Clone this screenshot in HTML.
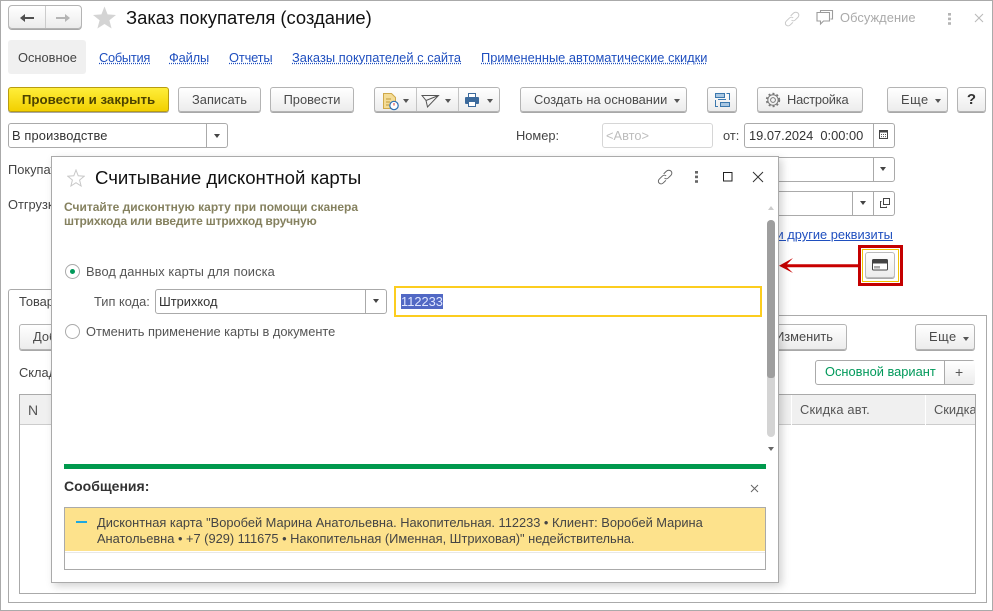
<!DOCTYPE html>
<html lang="ru"><head><meta charset="utf-8"><title>Заказ покупателя</title>
<style>
html,body{margin:0;padding:0;background:#fff}
#r{position:relative;width:993px;height:611px;overflow:hidden;background:#fff;font:12.85px/14px "Liberation Sans",sans-serif;color:#333}
#r div,#r span.t,#r svg{position:absolute}
.t{white-space:nowrap;position:absolute}
.b{box-sizing:border-box;border:1px solid #b4b4b4;border-radius:3px;background:linear-gradient(#fff,#ececec);box-shadow:0 1px 0 #a8a8a8;height:25px;text-align:center;line-height:24px;white-space:nowrap;color:#4a4a4a}
.f{box-sizing:border-box;border:1px solid #aaa;border-radius:3px;background:#fff;height:25px}
.l{color:#1f4fbf;text-decoration:underline dotted #1f4fbf}
.tr{width:6px;height:4px;background:#555;clip-path:polygon(0 0,100% 0,50% 100%)}
.sep{width:1px;background:#aaa}
</style></head><body><div id="r">
<div style="left:0;top:0;width:991px;height:609px;border:1px solid #aaa"></div>

<!-- Nav -->
<div class="b" style="left:8px;top:5px;width:74px;height:24px;border-radius:4px"></div>
<div class="sep" style="left:45px;top:6px;height:22px;background:#ccc"></div>
<svg style="left:19px;top:12px" width="16" height="12"><path d="M1 6L6 2V5H15V7H6V10Z" fill="#505050"/></svg>
<svg style="left:55px;top:12px" width="16" height="12"><path d="M15 6L10 2V5H1V7H10V10Z" fill="#b5b5b5"/></svg>
<svg style="left:92px;top:6px" width="25" height="24"><path d="M12.5 0.5L15.6 8.4L24 9L17.4 14.2L19.6 22.5L12.5 18L5.4 22.5L7.6 14.2L1 9L9.4 8.4Z" fill="#d4d4d4"/></svg>
<span class="t" style="left:126px;top:8px;font-size:18.4px;line-height:20px;color:#111">Заказ покупателя (создание)</span>

<svg style="left:784px;top:11px" width="16" height="16" viewBox="0 0 18 18" fill="none" stroke="#c8c8c8" stroke-width="1.1"><path d="M7.5 5.5L10.5 2.5C12 1 14.5 1 15.8 2.4C17 3.7 17 5.8 15.6 7.2L12.5 10.2C11.2 11.4 9.5 11.3 8.5 10.2"/><path d="M10.3 7.8C9.2 6.7 7.4 6.7 6.2 7.8L2.6 11.3C1.2 12.7 1.2 14.6 2.4 15.8C3.7 17 5.7 17 7 15.7L10 12.8"/></svg>
<svg style="left:816px;top:9px" width="18" height="18" fill="none" stroke="#9c9c9c" stroke-width="1.1"><path d="M4.5 3V1.5H16.5V10H14.5"/><path d="M1 3.5H13.5V12H7.5L4.5 15V12H1Z" fill="#fff"/></svg>
<span class="t" style="left:840px;top:11px;color:#aaa;letter-spacing:.08px">Обсуждение</span>
<svg style="left:947px;top:12px" width="6" height="14" fill="#b5b5b5"><rect x="1" y="1" width="3" height="2.6"/><rect x="1" y="5.6" width="3" height="2.6"/><rect x="1" y="10.2" width="3" height="2.6"/></svg>
<svg style="left:973px;top:12px" width="12" height="12" stroke="#bbb" stroke-width="1.1"><path d="M2 2L10 10M10 2L2 10"/></svg>

<!-- Tabs -->
<div style="left:8px;top:40px;width:78px;height:34px;background:#f0f0f0;border-radius:3px"></div>
<span class="t" style="left:18px;top:51px;color:#444">Основное</span>
<span class="t l" style="left:99px;top:51px;letter-spacing:-.28px">События</span>
<span class="t l" style="left:169px;top:51px;letter-spacing:-.15px">Файлы</span>
<span class="t l" style="left:229px;top:51px;letter-spacing:-.15px">Отчеты</span>
<span class="t l" style="left:292px;top:51px;letter-spacing:.04px">Заказы покупателей с сайта</span>
<span class="t l" style="left:481px;top:51px">Примененные автоматические скидки</span>

<!-- Toolbar -->
<div class="b" style="left:8px;top:87px;width:161px;background:linear-gradient(#ffee3a,#f2d000);border-color:#b89c10;font-weight:bold;color:#4d4300;font-size:13.3px">Провести и закрыть</div>
<div class="b" style="left:178px;top:87px;width:83px">Записать</div>
<div class="b" style="left:270px;top:87px;width:84px">Провести</div>
<div class="b" style="left:374px;top:87px;width:126px"></div>
<div class="sep" style="left:416px;top:88px;height:23px;background:#c4c4c4"></div>
<div class="sep" style="left:458px;top:88px;height:23px;background:#c4c4c4"></div>
<svg style="left:382px;top:93px" width="20" height="18"><path d="M1.5 0.5H9.5L13.5 4.5V15.5H1.5Z" fill="#f4dc96" stroke="#cfa94a"/><path d="M4 6H9M4 9H8M4 12H7" stroke="#c09a3a"/><circle cx="12" cy="12.5" r="4.2" fill="#fff" stroke="#2c6fb3" stroke-width="1.2"/><path d="M12 10V12.5" stroke="#d0342c"/></svg>
<div class="tr" style="left:403px;top:99px"></div>
<svg style="left:421px;top:93px" width="19" height="16" fill="none" stroke="#555" stroke-width="1"><path d="M1 2.5H17.5L6.5 14L5 7.5Z M5 7.5L17.5 2.5"/></svg>
<div class="tr" style="left:445px;top:99px"></div>
<svg style="left:464px;top:92px" width="18" height="16"><rect x="4.5" y="1.5" width="7" height="4" fill="#fff" stroke="#3c6a9c"/><rect x="1" y="5" width="14" height="7" rx="1" fill="#3c6a9c"/><rect x="4.5" y="9.5" width="7" height="5" fill="#fff" stroke="#3c6a9c"/></svg>
<div class="tr" style="left:487px;top:99px"></div>

<div class="b" style="left:520px;top:87px;width:167px;text-align:left;padding-left:13px">Создать на основании</div>
<div class="tr" style="left:674px;top:99px"></div>
<div class="b" style="left:707px;top:87px;width:30px"></div>
<svg style="left:714px;top:92px" width="16" height="16" fill="none"><rect x="1.5" y="1.5" width="9" height="4" fill="#a9c7e2" stroke="#3c78ad"/><rect x="6.5" y="10.5" width="9" height="4" fill="#a9c7e2" stroke="#3c78ad"/><path d="M1.5 8V14.5H4M15.5 8V1.5H12.5M4 7.5H12" stroke="#3c78ad"/></svg>
<div class="b" style="left:757px;top:87px;width:106px;text-align:left;padding-left:29px;letter-spacing:-.2px">Настройка</div>
<svg style="left:765px;top:92px" width="16" height="16" fill="none" stroke="#777"><circle cx="8" cy="8" r="2.4"/><circle cx="8" cy="8" r="5.2"/><circle cx="8" cy="8" r="6.4" stroke-dasharray="2 2.2" stroke-width="1.6"/></svg>
<div class="b" style="left:887px;top:87px;width:61px;text-align:left;padding-left:13px;letter-spacing:.5px">Еще</div>
<div class="tr" style="left:935px;top:99px"></div>
<div class="b" style="left:957px;top:87px;width:29px;font-weight:bold;font-size:15px;color:#333">?</div>

<!-- Fields row -->
<div class="f" style="left:8px;top:123px;width:220px"></div>
<span class="t" style="left:12px;top:129px;letter-spacing:.14px">В производстве</span>
<div class="sep" style="left:206px;top:124px;height:23px"></div>
<div class="tr" style="left:214px;top:134px;background:#444"></div>
<span class="t" style="left:516px;top:129px;color:#444">Номер:</span>
<div class="f" style="left:602px;top:123px;width:111px;border-color:#d6d6d6"></div>
<span class="t" style="left:606px;top:129px;color:#bdbdbd">&lt;Авто&gt;</span>
<span class="t" style="left:723px;top:129px;color:#444">от:</span>
<div class="f" style="left:744px;top:123px;width:151px"></div>
<span class="t" style="left:749px;top:129px;color:#333">19.07.2024 &nbsp;0:00:00</span>
<div class="sep" style="left:873px;top:124px;height:23px"></div>
<svg style="left:878px;top:128px" width="11" height="12"><rect x="1.5" y="2.5" width="8" height="8" fill="#fff" stroke="#444"/><rect x="1" y="2" width="9" height="2.5" fill="#444"/><path d="M3 6.5H8.5M3 8.6H8.5" stroke="#555" stroke-dasharray="1 1"/></svg>

<span class="t" style="left:8px;top:163px;color:#444">Покупатель:</span>
<span class="t" style="left:8px;top:198px;color:#444">Отгрузка:</span>
<div class="f" style="left:700px;top:157px;width:195px"></div>
<div class="sep" style="left:873px;top:158px;height:23px"></div>
<div class="tr" style="left:880px;top:167px;background:#444"></div>
<div class="f" style="left:700px;top:191px;width:195px"></div>
<div class="sep" style="left:852px;top:192px;height:23px"></div>
<div class="sep" style="left:873px;top:192px;height:23px"></div>
<div class="tr" style="left:860px;top:201px;background:#444"></div>
<svg style="left:879px;top:197px" width="12" height="12" fill="none" stroke="#444"><rect x="4.5" y="1.5" width="6" height="6"/><path d="M2.5 4.5H1.5V10.5H7.5V9.5"/></svg>
<span class="t" style="left:740px;top:228px;color:#1f4fbf;text-decoration:underline">Цены и другие реквизиты</span>

<!-- Card button with highlight -->
<div style="left:858px;top:245px;width:45px;height:41px;box-sizing:border-box;border:3px solid #c40000"></div>
<div style="left:862px;top:249px;width:37px;height:33px;box-sizing:border-box;border:1px solid #f2c200"></div>
<div class="b" style="left:865px;top:252px;width:30px;height:26px;border-color:#bbb"></div>
<svg style="left:872px;top:259px" width="16" height="12"><rect x="0.5" y="0.5" width="15" height="10.5" rx="1" fill="#fff" stroke="#444"/><rect x="1" y="1" width="14" height="3.5" fill="#444"/><path d="M3 7V9.5M5 7V9.5M7 7V9.5" stroke="#555"/></svg>
<svg style="left:778px;top:255px" width="82" height="22"><path d="M1 10.7L15 3L9 9.2H80V12.2H9L15 18Z" fill="#c80000"/></svg>

<!-- Tab panel -->
<div style="left:8px;top:315px;width:979px;height:288px;box-sizing:border-box;border:1px solid #aaa"></div>
<div style="left:8px;top:289px;width:60px;height:28px;box-sizing:border-box;border:1px solid #aaa;border-bottom:0;border-radius:3px 3px 0 0;background:#fff"></div>
<span class="t" style="left:19px;top:295px;color:#444">Товары</span>
<div class="b" style="left:19px;top:324px;width:60px;height:26px;text-align:left;padding-left:13px">Добавить</div>
<span class="t" style="left:19px;top:366px;color:#444">Склад</span>
<div style="left:19px;top:394px;width:957px;height:200px;box-sizing:border-box;border:1px solid #aaa"></div>
<div style="left:20px;top:395px;width:955px;height:30px;background:#f0f0f0;border-bottom:1px solid #ccc;box-sizing:border-box"></div>
<span class="t" style="left:28px;top:403px;font-size:14px;color:#555">N</span>
<div style="left:791px;top:395px;width:1px;height:30px;background:#fff"></div>
<div style="left:925px;top:395px;width:1px;height:30px;background:#fff"></div>
<span class="t" style="left:800px;top:403px;color:#555;letter-spacing:.18px">Скидка авт.</span>
<div style="left:934px;top:403px;width:41px;height:15px;overflow:hidden;color:#555;white-space:nowrap">Скидка</div>
<div class="b" style="left:700px;top:324px;width:147px;height:26px;text-align:right;padding-right:13px">Изменить</div>
<div class="b" style="left:915px;top:324px;width:60px;height:26px;text-align:left;padding-left:13px;letter-spacing:.5px">Еще</div>
<div class="tr" style="left:963px;top:337px"></div>
<div class="f" style="left:815px;top:360px;width:160px;height:25px"></div>
<span class="t" style="left:825px;top:365px;color:#00995a">Основной вариант</span>
<div style="left:944px;top:361px;width:30px;height:23px;background:linear-gradient(#fff,#ececec);border-left:1px solid #aaa"></div>
<span class="t" style="left:955px;top:365px;color:#555;font-size:14px">+</span>

<!-- Dialog -->
<div style="left:51px;top:156px;width:728px;height:427px;box-sizing:border-box;background:#fff;border:1px solid #aaa;box-shadow:3px 3px 8px rgba(0,0,0,.18)"></div>
<svg style="left:67px;top:169px" width="18" height="18"><path d="M9 1L11.2 6.8L17.2 7.2L12.6 11L14.1 17L9 13.7L3.9 17L5.4 11L0.8 7.2L6.8 6.8Z" fill="#fff" stroke="#c8c8c8"/></svg>
<span class="t" style="left:95px;top:167px;font-size:18.6px;line-height:21px;color:#111">Считывание дисконтной карты</span>
<svg style="left:657px;top:169px" width="16" height="16" viewBox="0 0 18 18" fill="none" stroke="#666" stroke-width="1.1"><path d="M7.5 5.5L10.5 2.5C12 1 14.5 1 15.8 2.4C17 3.7 17 5.8 15.6 7.2L12.5 10.2C11.2 11.4 9.5 11.3 8.5 10.2"/><path d="M10.3 7.8C9.2 6.7 7.4 6.7 6.2 7.8L2.6 11.3C1.2 12.7 1.2 14.6 2.4 15.8C3.7 17 5.7 17 7 15.7L10 12.8"/></svg>
<svg style="left:694px;top:171px" width="5" height="13" fill="#666"><rect x="1" y="0" width="3" height="2.6"/><rect x="1" y="4.6" width="3" height="2.6"/><rect x="1" y="9.2" width="3" height="2.6"/></svg>
<svg style="left:722px;top:172px" width="11" height="11" fill="none" stroke="#222" stroke-width="1"><rect x="1.5" y="0.5" width="8.5" height="8.5"/></svg>
<svg style="left:752px;top:171px" width="12" height="12" stroke="#333" stroke-width="1"><path d="M1 1L11 11M11 1L1 11"/></svg>

<span class="t" style="left:64px;top:201px;font-size:12px;line-height:13.5px;font-weight:bold;color:#85815f;white-space:pre">Считайте дисконтную карту при помощи сканера
<span style="letter-spacing:-.18px">штрихкода или введите штрихкод вручную</span></span>

<div style="left:65px;top:264px;width:15px;height:15px;box-sizing:border-box;border:1px solid #aaa;border-radius:50%;background:#fff"></div>
<div style="left:70px;top:269px;width:5px;height:5px;border-radius:50%;background:#00995a"></div>
<span class="t" style="left:86px;top:265px;color:#555;letter-spacing:.1px">Ввод данных карты для поиска</span>
<span class="t" style="left:94px;top:295px;color:#555">Тип кода:</span>
<div class="f" style="left:155px;top:289px;width:232px"></div>
<span class="t" style="left:159px;top:295px;color:#333">Штрихкод</span>
<div class="sep" style="left:365px;top:290px;height:23px"></div>
<div class="tr" style="left:373px;top:299px;background:#444"></div>
<div style="left:394px;top:286px;width:368px;height:31px;box-sizing:border-box;border:2px solid #fccd1f;background:#fff"></div>
<span class="t" style="left:401px;top:294px;line-height:15px;background:#5168c4;color:#dfe6ff">112233</span>
<div style="left:65px;top:324px;width:15px;height:15px;box-sizing:border-box;border:1px solid #aaa;border-radius:50%;background:#fff"></div>
<span class="t" style="left:86px;top:325px;color:#555;letter-spacing:-.03px">Отменить применение карты в документе</span>

<!-- Scroll -->
<div style="left:767px;top:220px;width:8px;height:217px;background:#d4d4d4;border-radius:4px"></div>
<div style="left:767px;top:220px;width:8px;height:158px;background:#9e9e9e;border-radius:4px 4px 3px 3px"></div>
<div class="tr" style="left:768px;top:206px;background:#ccc;clip-path:polygon(50% 0,100% 100%,0 100%)"></div>
<div class="tr" style="left:768px;top:447px;background:#666"></div>

<!-- Messages -->
<div style="left:64px;top:464px;width:702px;height:5px;background:#00994d"></div>
<span class="t" style="left:64px;top:479px;font-size:14px;font-weight:bold;color:#333">Сообщения:</span>
<svg style="left:750px;top:484px" width="9" height="9" stroke="#666" stroke-width="1"><path d="M1 1L8 8M8 1L1 8"/></svg>
<div style="left:64px;top:507px;width:702px;height:63px;box-sizing:border-box;border:1px solid #aaa;background:#fff"></div>
<div style="left:65px;top:508px;width:700px;height:43px;background:#fde28c;border-bottom:1px solid #fff"></div>
<div style="left:65px;top:552px;width:700px;height:1px;background:#e8e8e8"></div>
<div style="left:76px;top:521px;width:11px;height:2px;background:#1ea8e0"></div>
<span class="t" style="left:97px;top:515px;line-height:16px;color:#444;white-space:pre;letter-spacing:-.01px">Дисконтная карта "Воробей Марина Анатольевна. Накопительная. 112233 • Клиент: Воробей Марина
Анатольевна • +7 (929) 111675 • Накопительная (Именная, Штриховая)" недействительна.</span>
</div></body></html>
